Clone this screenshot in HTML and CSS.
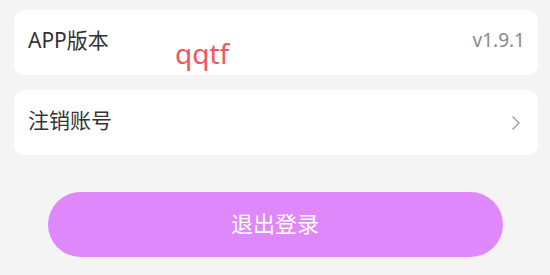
FILE: index.html
```html
<!DOCTYPE html>
<html lang="zh">
<head>
<meta charset="utf-8">
<link rel="stylesheet" href="styles.css">
</head>
<body>
<div class="page">
  <div class="card">
    <span class="label">APP版本</span>
    <span class="value">v1.9.1</span>
  </div>
  <div class="card">
    <span class="label">注销账号</span>
    <svg class="chev" width="10" height="16" viewBox="0 0 10 16"><path d="M1.5 1.5 L8 8 L1.5 14.5" fill="none" stroke="#999" stroke-width="1.3"/></svg>
  </div>
  <div class="actions">
    <button class="logout">退出登录</button>
  </div>
  <div class="watermark">qqtf</div>
</div>
</body>
</html>
```
FILE: styles.css
```css
html, body {
  margin: 0;
  padding: 0;
  background: #f4f4f4;
  font-family: "Noto Sans", "Noto Sans CJK SC", sans-serif;
}
.page {
  position: relative;
  width: 550px;
  height: 275px;
  padding: 10px 12px 0 14px;
  box-sizing: border-box;
  display: flex;
  flex-direction: column;
  gap: 15px;
}
.card {
  height: 65px;
  box-sizing: border-box;
  background: #fff;
  border-radius: 10px;
  display: flex;
  align-items: center;
  justify-content: space-between;
  padding: 0 13px 4px 14px;
}
.label {
  font-size: 21px;
  color: #333;
  line-height: 1;
}
.value {
  font-size: 19px;
  color: #8a8a8a;
  line-height: 1;
}
.chev {
  margin-right: 4px;
  margin-top: 4px;
}
.actions {
  display: flex;
  justify-content: center;
  padding-top: 22px;
  padding-right: 2px;
}
.logout {
  width: 455px;
  height: 65px;
  border: none;
  border-radius: 33px;
  background: #df88fc;
  color: #fff;
  font-family: "Noto Sans CJK SC", sans-serif;
  font-size: 22px;
  padding: 0 0 5px 0;
}
.watermark {
  position: absolute;
  left: 175px;
  top: 34px;
  font-size: 28px;
  color: #f0555d;
  font-family: "Noto Sans", sans-serif;
}
```
